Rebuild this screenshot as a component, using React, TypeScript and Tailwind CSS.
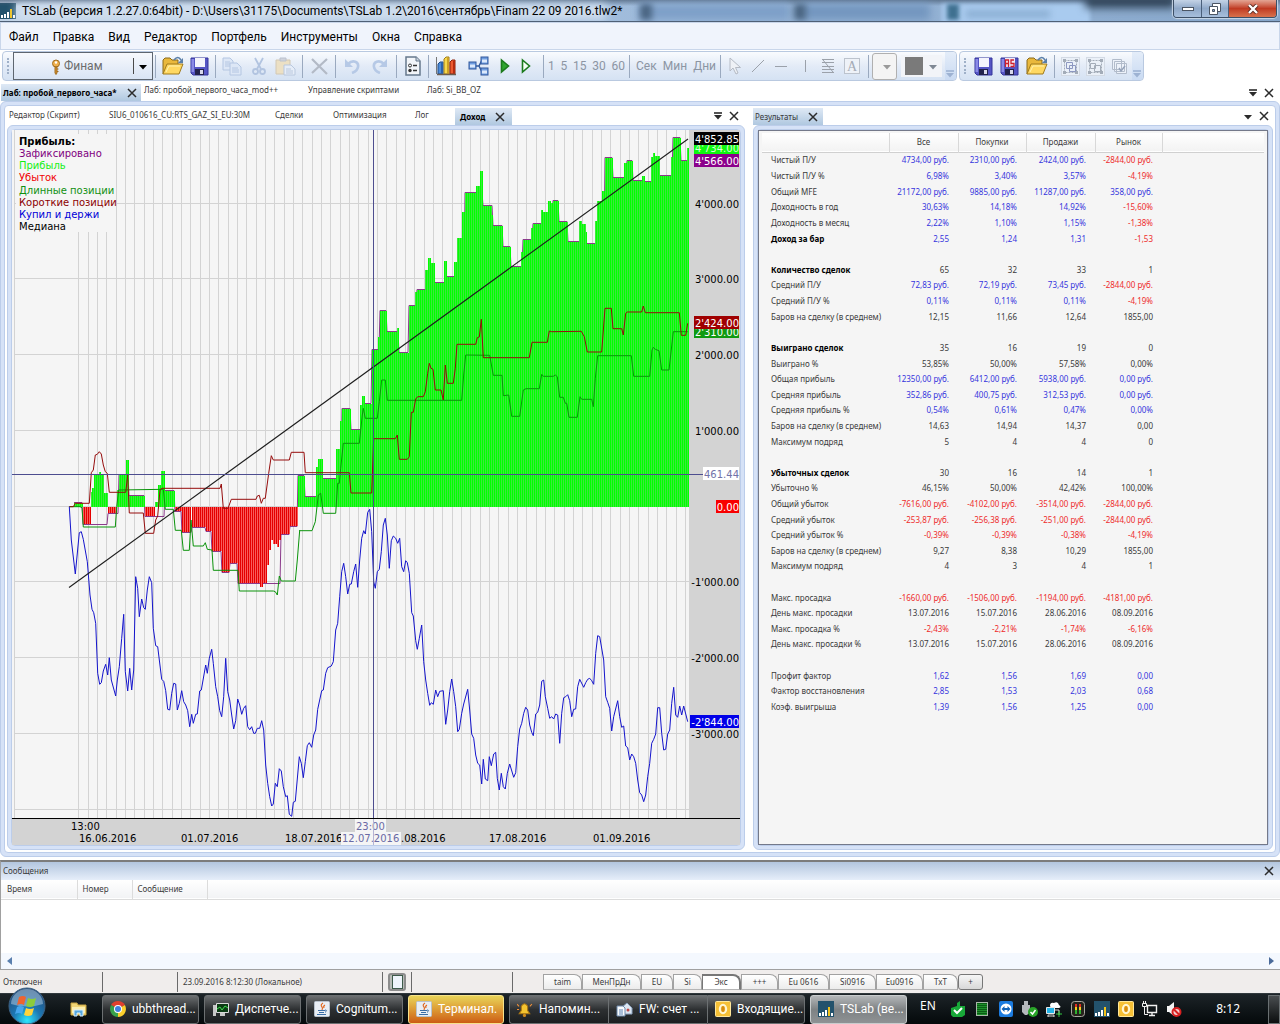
import type { ReactNode } from "react";
import clsx from "clsx";

type Segment = [number, number, string];

// every segment is an origin plus points counted in thirds of a pixel from it
const trace = (segments: Segment[]) =>
  segments
    .flatMap(([ox, oy, pts]) =>
      pts.split(" ").map((p) => {
        const [x, y] = p.split(",").map(Number);
        return `${(ox + x / 3).toFixed(1)},${(oy + y / 3).toFixed(1)}`;
      }),
    )
    .join(" ");

const SHORTS = trace([
  [60, 440, "28,200 40,200 46,190 88,190 94,98 100,90 106,45 112,43 118,35 124,42 130,75 136,95 142,100 148,157 197,157 203,105 208,219 250,219 256,280 281,280 287,240 293,228 300,150 306,145 480,145 484,132 490,205 504,205 514,178 588,178 592,168 598,166 604,190 610,175 616,175 626,100 634,47 640,60 688,60 694,37 732,37 736,98"],
  [0, 125, "917,1043 1048,1043 1053,1104 1115,1104 1121,940"],
  [370, 125, "10,941 76,941 82,930 88,1003 112,1003 118,995 124,862 130,862 137,822 143,815 160,815 166,800 173,745 178,715 183,730 189,733 196,795 213,795 220,825 226,720 232,775 250,775 256,730 261,658 317,658 322,638 328,636 334,583 340,698 478,698 486,652 532,652 538,618 545,620 634,619 643,635 652,681 695,681 705,550 724,550 729,611 755,611 760,630 767,565 772,561 815,561 820,543 826,563 928,563 934,631 947,631 953,595"],
]);

const LONGS = trace([
  [60, 440, "28,200 60,200 66,203 70,261 166,261 170,200 176,150 310,148 316,208 340,208 346,271 364,271 370,331 388,331 393,240 400,318 430,318 436,308 442,328 456,330 460,391 534,391 538,453 640,453 646,455 652,465 658,408 664,423 706,423 712,360 719,271"],
  [0, 480, "898,152 936,152 946,125 955,45 962,40 970,100 1007,100 1013,10 1018,10"],
  [0, 125, "1022,1030 1030,955 1078,955 1087,870 1090,850 1096,880 1132,880"],
  [370, 125, "22,880 28,830 35,765 46,765 52,826 275,826 281,750 287,690 359,691 370,751 396,751 400,812 416,810 425,874 449,874 460,795 468,791 508,791 515,748 520,754 550,754 556,750 562,755 569,817 580,817 586,835 590,835 597,877 622,877 630,815 635,823 665,823 670,845 676,760 683,692 784,692 791,754 839,754 846,675 850,667 856,673 867,677 875,735 897,735 910,620 953,620"],
]);

const BUY_AND_HOLD = trace([
  [0, 480, "208,80 214,180 226,282 238,158 244,155 250,178 262,245 270,345 276,388 281,398 287,430 293,580 299,613 304,608 310,573 317,553 323,585 328,533 334,600 347,648 352,600 358,560 365,475 371,403 376,575 383,633 389,565 395,630 401,570 407,290 413,325 418,410 425,357 431,383 436,388 442,330 448,290 455,308 460,445 467,497 473,500 485,598 491,604 497,632 503,688 509,690 515,640 521,610 527,612 532,690 538,670 545,632 551,665 557,675 563,692 569,740 575,703 580,730 587,703 592,702 599,633 604,630 617,555 622,580 628,535 635,508 640,550 647,620 653,650 659,692 665,710 671,650 677,535 683,635 689,660 695,705 701,747 707,722 713,657 719,675 725,703 731,685 737,677 743,740 749,749 755,740 761,760 766,760 772,745 779,745 785,722 791,750 797,855 803,910 809,950 815,978 820,972 826,910 832,920 838,866 844,873 850,920 857,950 862,947 868,1003 875,1009 880,967 886,964 898,830 904,850 910,893 916,845 922,797 928,788 935,802 941,765 947,750 953,688 959,660 965,632 970,630 977,580 983,563 994,558 1000,545 1007,450 1013,430 1019,350 1025,275 1031,250 1037,290 1043,342 1049,313 1054,312 1061,275 1067,252 1073,322 1079,240 1085,175 1091,152 1096,162 1103,97 1109,88"],
  [370, 480, "5,155 11,305 16,325 22,275 28,268 34,215 40,135 46,115 52,165 58,265 64,182 70,168 77,175 83,190 89,175 95,260 101,275 107,242 112,248 118,280 125,398 130,408 137,482 142,508 148,475 155,435 161,545 167,600 173,640 179,676 184,668 190,673 197,630 203,650 209,634 220,632 227,733 233,690 239,635 245,597 251,635 257,680 263,755 268,748 275,700 281,672 293,628 299,690 305,762 311,775 317,825 323,850 329,855 335,912 340,838 346,897 353,902 358,830 364,857 371,822 377,817 382,895 388,930 394,880 400,920 406,927 412,880 419,852 431,892 437,878 443,800 449,747 455,730 461,700 467,682 473,690 479,735 485,757 490,767 497,702 503,697 509,675 515,604 521,600 526,650 533,685 539,715 545,710 551,717 557,702 563,705 569,790 575,700 581,653 587,650 593,644 599,662 605,710 611,688 617,687 623,620 629,598 641,622 647,608 653,598 659,595 665,602 671,613 677,520 683,467 689,470 701,540 707,650 713,667 719,685 725,753 731,710 743,662 749,710 755,742 761,738 767,798 773,803 779,840 785,822 791,830 797,850 803,900 809,938 815,945 821,965 827,945 833,890 839,850 845,790 851,778 857,762 863,683 869,683 875,760 881,810 887,808 893,762 899,750 905,670 911,622 917,705 923,712 929,678 935,705 941,678 953,725"],
]);

// [x start, x end, level]; above the zero line is profit, below it is loss
const STEPS: number[][] = [
  [70, 74, 506], [74, 83, 503], [83, 91, 524], [91, 92, 492], [92, 94, 488], [94, 99, 475], [99, 101, 472], [101, 104, 475],
  [104, 108, 493], [108, 117, 513], [117, 119, 490], [119, 126, 475], [126, 129, 460], [129, 145, 496], [145, 155, 516],
  [155, 158, 502], [158, 161, 485], [161, 165, 471], [165, 175, 491], [175, 182, 511], [182, 191, 532], [192, 206, 527],
  [206, 212, 531], [212, 222, 551], [222, 230, 572], [230, 238, 563], [238, 260, 583], [260, 263, 587], [263, 267, 583],
  [267, 269, 565], [269, 271, 550], [271, 273, 540], [273, 277, 544], [277, 279, 547], [279, 281, 540], [281, 290, 534],
  [290, 298, 526], [298, 305, 476], [305, 316, 497], [316, 318, 467], [318, 323, 459], [323, 336, 479], [336, 340, 449],
  [340, 342, 421], [342, 351, 409], [351, 360, 430], [360, 362, 405], [362, 365, 396], [365, 372, 404], [372, 378, 350],
  [378, 380, 337], [380, 387, 311], [387, 397, 332], [397, 399, 328], [399, 409, 353], [409, 415, 306], [415, 417, 292],
  [417, 425, 290], [425, 428, 270], [428, 431, 258], [431, 435, 263], [435, 444, 283], [444, 447, 261], [447, 454, 277],
  [454, 457, 262], [457, 462, 238], [462, 465, 212], [465, 476, 193], [476, 480, 186], [480, 483, 171], [483, 492, 206],
  [492, 493, 215], [493, 503, 226], [503, 511, 247], [511, 521, 267], [521, 523, 252], [523, 531, 240], [531, 533, 228],
  [533, 541, 224], [541, 543, 210], [543, 548, 212], [548, 551, 201], [551, 553, 203], [553, 559, 201], [559, 568, 222],
  [568, 579, 242], [579, 582, 221], [582, 586, 224], [586, 587, 232], [587, 595, 244], [595, 597, 221], [597, 602, 201],
  [602, 605, 191], [605, 613, 158], [613, 624, 178], [624, 627, 163], [627, 633, 161], [633, 642, 181], [642, 645, 176],
  [645, 651, 182], [651, 653, 157], [653, 655, 153], [655, 660, 156], [660, 671, 176], [671, 673, 157], [673, 681, 138],
  [681, 687, 161], [687, 689, 148],
];

const ZERO = 507;

const isProfit = (y: number) => y < ZERO;
const isLoss = (y: number) => y > ZERO;

const area = (pick: (y: number) => boolean) =>
  STEPS.filter((s) => pick(s[2])).map(([a, b, y]) => `M${a} ${ZERO}V${y}H${b}V${ZERO}Z`).join("");

// one thin line for every bar
const bars = (pick: (y: number) => boolean) =>
  STEPS.filter((s) => pick(s[2]))
    .flatMap(([a, b, y]) => {
      const lines: string[] = [];
      for (let x = a + (a % 2); x < b; x += 2) lines.push(`M${x + 0.5} ${ZERO}V${y}`);
      return lines;
    })
    .join("");

// closed profit holds its level until the next long step begins
const FIXED = STEPS.filter(([a, b]) => b - a > 5)
  .map(([a, b, y], i, all) => {
    const level = y < ZERO ? y - 0.5 : y + 0.5;
    const end = i + 1 < all.length ? all[i + 1][0] - 1 : b;
    return `${a},${level} ${end},${level}`;
  })
  .join(" ");

const GRID_X = Array.from({ length: 66 }, (_, i) => Math.round(78.3 + (i * 28) / 3) + 0.5);
const GRID_Y = [203.5, 278.5, 354.5, 430.5, 506.5, 581.5, 657.5, 733.5, 809.5];

const AXIS: [number, string][] = [
  [208, "4'000.00"], [283, "3'000.00"], [359, "2'000.00"], [435, "1'000.00"],
  [586, "-1'000.00"], [662, "-2'000.00"], [738, "-3'000.00"],
];

// x, top, height, fill, text colour, label
const MARKS: [number, number, number, string, string, string][] = [
  [694, 142, 12, "#10f810", "#d8ffd8", "4'734.00"],
  [694, 132, 13, "#000000", "#ffffff", "4'852.85"],
  [694, 154, 13, "#8b008b", "#ffffff", "4'566.00"],
  [694, 327, 11, "#109a10", "#ffffff", "2'310.00"],
  [694, 316, 13, "#a00000", "#ffffff", "2'424.00"],
  [703, 467, 13, "#ffffff", "#7272a8", "461.44"],
  [716, 500, 13, "#f80000", "#ffffff", "0.00"],
  [690, 715, 13, "#0000e8", "#ffffff", "-2'844.00"],
];

const LEGEND: [string, string][] = [
  ["Зафиксировано", "#800080"],
  ["Прибыль", "#14f014"],
  ["Убыток", "#f00000"],
  ["Длинные позиции", "#109010"],
  ["Короткие позиции", "#8b0000"],
  ["Купил и держи", "#0000d8"],
  ["Медиана", "#000000"],
];

const DATES: [number, string][] = [
  [79, "16.06.2016"], [181, "01.07.2016"], [285, "18.07.2016"], [401, ".08.2016"], [489, "17.08.2016"], [593, "01.09.2016"],
];

function ProfitChart() {
  return (
    <svg viewBox="12 130 728 715" className="block w-full font-['DejaVu_Sans',sans-serif] text-[10px]">
      <rect x="12" y="130" width="728" height="715" fill="#d3d3d3" />
      <rect x="12" y="130" width="677" height="688" fill="#f5f5f5" />
      <g stroke="#d3d3d3">
        <path d="M14.5 130V818" />
        {GRID_X.map((x) => <path key={x} d={`M${x} 130V818`} />)}
        {GRID_Y.map((y) => <path key={y} d={`M14 ${y}H689`} />)}
      </g>
      <polyline points={FIXED} fill="none" stroke="#8b3a8b" />
      <path d={area(isProfit)} fill="#3ce83c" />
      <path d={bars(isProfit)} stroke="#00ff00" />
      <path d={area(isLoss)} fill="#f85c5c" />
      <path d={bars(isLoss)} stroke="#e40000" />
      <polyline points={LONGS} fill="none" stroke="#0b930b" />
      <polyline points={SHORTS} fill="none" stroke="#960c0c" />
      <polyline points={BUY_AND_HOLD} fill="none" stroke="#1414cc" />
      <path d="M69 587.5L688 139" stroke="#1c1c1c" strokeWidth="1.1" />
      <path d="M12 474.5H703M373.5 130V818" stroke="#4d4d8f" />

      <rect x="16" y="134" width="100" height="98" fill="#f5f5f5" />
      <text x="19" y="145" className="font-bold">Прибыль:</text>
      {LEGEND.map(([label, color], i) => (
        <text key={label} x="19" y={157 + Math.round(i * 12.2)} fill={color}>{label}</text>
      ))}

      {AXIS.map(([y, label]) => <text key={label} x="739" y={y} textAnchor="end">{label}</text>)}
      {MARKS.map(([x, y, h, fill, color, label]) => (
        <g key={label}>
          <rect x={x} y={y} width={739 - x} height={h} fill={fill} />
          <text x="739" y={y + h - 2} textAnchor="end" fill={color}>{label}</text>
        </g>
      ))}

      <path d="M12 818.5H740" stroke="#000" />
      <text x="71" y="830">13:00</text>
      {DATES.map(([x, label]) => <text key={label} x={x} y="842">{label}</text>)}
      <rect x="355" y="819" width="31" height="13" fill="#f5f5f5" />
      <rect x="341" y="832" width="60" height="13" fill="#f5f5f5" />
      <text x="356" y="830" fill="#6a6aa4">23:00</text>
      <text x="342" y="842" fill="#6a6aa4">12.07.2016</text>
      <path d="M373.5 819V845" stroke="#b4b4d4" />
    </svg>
  );
}

const RESULTS = `Чистый П/У|4734,00 руб.|2310,00 руб.|2424,00 руб.|-2844,00 руб.
Чистый П/У %|6,98%|3,40%|3,57%|-4,19%
Общий MFE|21172,00 руб.|9885,00 руб.|11287,00 руб.|358,00 руб.
Доходность в год|30,63%|14,18%|14,92%|-15,60%
Доходность в месяц|2,22%|1,10%|1,15%|-1,38%
*Доход за бар|2,55|1,24|1,31|-1,53

*#Количество сделок|65|32|33|1
Средний П/У|72,83 руб.|72,19 руб.|73,45 руб.|-2844,00 руб.
Средний П/У %|0,11%|0,11%|0,11%|-4,19%
#Баров на сделку (в среднем)|12,15|11,66|12,64|1855,00

*#Выиграно сделок|35|16|19|0
#Выиграно %|53,85%|50,00%|57,58%|0,00%
Общая прибыль|12350,00 руб.|6412,00 руб.|5938,00 руб.|0,00 руб.
Средняя прибыль|352,86 руб.|400,75 руб.|312,53 руб.|0,00 руб.
Средняя прибыль %|0,54%|0,61%|0,47%|0,00%
#Баров на сделку (в среднем)|14,63|14,94|14,37|0,00
#Максимум подряд|5|4|4|0

*#Убыточных сделок|30|16|14|1
#Убыточно %|46,15%|50,00%|42,42%|100,00%
Общий убыток|-7616,00 руб.|-4102,00 руб.|-3514,00 руб.|-2844,00 руб.
Средний убыток|-253,87 руб.|-256,38 руб.|-251,00 руб.|-2844,00 руб.
Средний убыток %|-0,39%|-0,39%|-0,38%|-4,19%
#Баров на сделку (в среднем)|9,27|8,38|10,29|1855,00
#Максимум подряд|4|3|4|1

Макс. просадка|-1660,00 руб.|-1506,00 руб.|-1194,00 руб.|-4181,00 руб.
#День макс. просадки|13.07.2016|15.07.2016|28.06.2016|08.09.2016
Макс. просадка %|-2,43%|-2,21%|-1,74%|-6,16%
#День макс. просадки %|13.07.2016|15.07.2016|28.06.2016|08.09.2016

Профит фактор|1,62|1,56|1,69|0,00
Фактор восстановления|2,85|1,53|2,03|0,68
Коэф. выигрыша|1,39|1,56|1,25|0,00`.split("\n");

function ResultsTable() {
  return (
    <table className="h-[582px] w-full table-fixed border-collapse text-[8px] leading-[10px] text-[#3a3a3a]">
      <colgroup>
        <col className="w-[127px]" />
        <col className="w-[69px]" />
        <col className="w-[68px]" />
        <col className="w-[69px]" />
        <col className="w-[67px]" />
        <col />
      </colgroup>
      <thead>
        <tr className="h-[19px] border-b border-[#d0d0d0] bg-linear-to-b from-white to-[#f3f3f3]">
          {["", "Все", "Покупки", "Продажи", "Рынок", ""].map((h, i) => (
            <th key={i} className={clsx("p-0 text-center font-normal", i < 5 && "border-r border-[#d8d8d8]")}>{h}</th>
          ))}
        </tr>
      </thead>
      <tbody>
        {RESULTS.map((line, i) => {
          const [name, ...cells] = line.split("|");
          return (
            <tr key={i}>
              <th className={clsx("p-0 pl-[9px] text-left whitespace-nowrap", name.startsWith("*") ? "font-bold text-black" : "font-normal")}>
                {name.replace(/^[*#]+/, "") || "\u00a0"}
              </th>
              {cells.map((c, j) => (
                <td
                  key={j}
                  className={clsx(
                    "p-0 pr-[9px] text-right whitespace-nowrap",
                    /^\*?#/.test(name) ? "text-[#3a3a3a]" : c.startsWith("-") ? "text-[#ee2c2c]" : "text-[#3535dd]",
                  )}
                >
                  {c}
                </td>
              ))}
            </tr>
          );
        })}
      </tbody>
    </table>
  );
}

function Cross({ size = 10 }: { size?: number }) {
  return (
    <svg width={size} height={size} viewBox="0 0 10 10" className="shrink-0">
      <path d="M1 1L9 9M9 1L1 9" stroke="#2b2b2b" strokeWidth="1.5" />
    </svg>
  );
}

function Caret({ bar, className = "text-[#2b2b2b]" }: { bar?: boolean; className?: string }) {
  return (
    <svg width="10" height="8" viewBox="0 0 10 8" className={clsx("shrink-0", className)}>
      {bar && <path d="M1 1H9" stroke="currentColor" strokeWidth="1.6" />}
      <path d="M1 3H9L5 7.5Z" fill="currentColor" />
    </svg>
  );
}

function FolderIcon() {
  return (
    <svg width="22" height="20" viewBox="0 0 22 20">
      <path d="M1 18V4L3 2H8L10 4H16V8" fill="#e9b83c" stroke="#8a6a1c" />
      <path d="M1 18L5 8H21L17 18Z" fill="#ffd861" stroke="#a07a1c" />
      <path d="M4 16L7 10H18" fill="none" stroke="#fff2b0" />
      <path d="M12 4Q16 -1 19 4" fill="none" stroke="#5a7fa8" strokeWidth="1.6" />
      <path d="M21 2V7H16Z" fill="#5a7fa8" />
    </svg>
  );
}

function SaveIcon({ as }: { as?: boolean }) {
  return (
    <svg width="19" height="19" viewBox="0 0 19 19">
      <path d="M1 1H18V18H3L1 16Z" fill="#5555c4" stroke="#34349a" />
      <path d="M1.500 2H4V15H1.500Z" fill="#8a8ae6" />
      <rect x="5" y="1" width="10" height="9" fill={as ? "#eeeaf8" : "#f4f4fc"} />
      {as && <path d="M5.500 10V3H8.500V10M5.500 6.500H8.500M14 3H11V6.500H14V9.500H10.500" fill="none" stroke="#d0202c" strokeWidth="1.300" />}
      <rect x="5" y="12" width="9" height="6" fill="#22224c" />
      <rect x="10" y="13" width="3" height="4" fill="#d8d8ea" />
    </svg>
  );
}

function CopyIcon() {
  return (
    <svg width="20" height="19" viewBox="0 0 20 19" fill="#dde7f6" stroke="#b4c6e2">
      <path d="M1 1H8L11 4V13H1Z" />
      <path d="M3 5H8M3 7H8M3 9H8" />
      <path d="M8 6H15L19 10V18H8Z" />
      <path d="M10 11H16M10 13H17M10 15H17" />
    </svg>
  );
}

function CutIcon() {
  return (
    <svg width="14" height="19" viewBox="0 0 14 19" fill="none" stroke="#b2c4e0" strokeWidth="1.800">
      <path d="M3 1L9 12M11 1L5 12" />
      <circle cx="3.500" cy="14.500" r="2.500" />
      <circle cx="10.500" cy="14.500" r="2.500" />
    </svg>
  );
}

function PasteIcon() {
  return (
    <svg width="21" height="19" viewBox="0 0 21 19">
      <path d="M1 3H15V17H1Z" fill="#ece0c4" stroke="#d2c8b4" />
      <path d="M5 1H11V4H5Z" fill="#cfd3dc" stroke="#bcc2ce" />
      <path d="M9 8H16L20 12V18H9Z" fill="#e6edf8" stroke="#b9c8de" />
      <path d="M11 12H16M11 14H18M11 16H18" stroke="#b9c8de" />
    </svg>
  );
}

function UndoIcon({ flip }: { flip?: boolean }) {
  return (
    <svg width="17" height="16" viewBox="0 0 17 16" className={clsx(flip && "-scale-x-100")}>
      <path d="M4 6C9 1 15 4 14 9C13.500 12 11 14 8 15" fill="none" stroke="#b6c9e6" strokeWidth="2.600" />
      <path d="M1 1V9H9Z" fill="#b6c9e6" />
    </svg>
  );
}

function ScriptIcon() {
  return (
    <svg width="16" height="20" viewBox="0 0 16 20">
      <path d="M1 1H11L15 5V19H1Z" fill="#f2f5f9" stroke="#66788c" strokeWidth="1.500" />
      <path d="M11 1V5H15" fill="#cbd5e0" stroke="#66788c" />
      <path d="M8 9.500H12M8 14.500H12" stroke="#333" strokeWidth="1.500" />
      <circle cx="5" cy="9.500" r="1.500" fill="none" stroke="#333" />
      <circle cx="5" cy="14.500" r="1.700" fill="#333" />
    </svg>
  );
}

function BooksIcon() {
  return (
    <svg width="22" height="21" viewBox="0 0 22 21">
      <path d="M1.500 1V18" fill="none" stroke="#777" />
      <path d="M3 8L5 6H8V18H3Z" fill="#4a8cdc" stroke="#1f4a84" />
      <path d="M6 6H8V18H6Z" fill="#2c62ac" />
      <path d="M9 3L11 1H14V18H9Z" fill="#f6d84c" stroke="#a07c18" />
      <path d="M12 2H14V18H12Z" fill="#cfa024" />
      <path d="M15 6L17 4H20V18H15Z" fill="#ee5a30" stroke="#8c2008" />
      <path d="M18 5H20V18H18Z" fill="#b42c10" />
      <path d="M2 18.500H21" stroke="#6b5c50" strokeWidth="1.500" />
    </svg>
  );
}

function NodesIcon() {
  return (
    <svg width="21" height="20" viewBox="0 0 21 20" fill="#6f9de0" stroke="#32599c">
      <path d="M8 10H11M11 10L14 4M11 10L14 16" fill="none" strokeWidth="1.500" />
      <rect x="1" y="6" width="7" height="7" />
      <rect x="13" y="1" width="7" height="7" />
      <rect x="13" y="12" width="7" height="7" />
      <path d="M2 10H7M14 5H19M14 16H19" stroke="#dce9fb" strokeWidth="3" />
    </svg>
  );
}

function PlayIcon({ hollow }: { hollow?: boolean }) {
  return (
    <svg width="10" height="16" viewBox="0 0 10 16">
      <path d="M1.500 2L8.500 8L1.500 14Z" fill={hollow ? "#f4fff4" : "#2fa52f"} stroke="#1c7a1c" strokeWidth="1.600" />
    </svg>
  );
}

function PointerIcon() {
  return (
    <svg width="13" height="18" viewBox="0 0 13 18">
      <path d="M1 1V14L4 11L7 17L9 16L6.500 10.500H11.500Z" fill="#eef1f6" stroke="#b4bac4" />
    </svg>
  );
}

function StrokeIcon({ d }: { d: string }) {
  return (
    <svg width="14" height="16" viewBox="0 0 14 16" fill="none" stroke="#9ba1aa">
      <path d={d} />
    </svg>
  );
}

function GroupIcon({ inner }: { inner: ReactNode }) {
  return (
    <svg width="19" height="19" viewBox="0 0 19 19" fill="none" stroke="#a3acb8">
      <rect x="0.500" y="0.500" width="18" height="18" stroke="#d3dae4" fill="#eaf0f8" />
      <path d="M3.500 3.500H15.500V15.500H3.500Z" strokeDasharray="2 1" />
      <path d="M2 2H5V5H2ZM14 2H17V5H14ZM2 14H5V17H2ZM14 14H17V17H14Z" fill="#a3acb8" stroke="none" />
      {inner}
    </svg>
  );
}

function TsLabIcon({ size = 16 }: { size?: number }) {
  return (
    <svg width={size} height={size} viewBox="0 0 16 16" className="shrink-0">
      <rect width="16" height="16" fill="#23526c" />
      <path d="M1 12H3V15H1ZM4 11H6V15H4ZM7 9H9V15H7ZM13 12H15V15H13Z" fill="#fff" />
      <path d="M10 6H12V15H10Z" fill="#f2c319" />
    </svg>
  );
}

function ToolGroup({ className, children }: { className: string; children: ReactNode }) {
  return <div className={clsx("flex h-[23px] shrink-0 items-center border-l border-[#9aa9bf]", className)}>{children}</div>;
}

function ToolButton({ label, children }: { label: string; children: ReactNode }) {
  return (
    <button type="button" aria-label={label} className="flex h-6 items-center">
      {children}
    </button>
  );
}

function Grip() {
  return <div className="mx-1 h-4 w-0 shrink-0 border-l-2 border-dotted border-[#9fb0c8]" />;
}

function Overflow() {
  return (
    <div className="ml-auto flex w-[11px] shrink-0 items-end self-stretch rounded-r bg-linear-to-b from-[#e4edf9] to-[#c9daf2] pb-0.5">
      <Caret bar className="text-[#9db2d2]" />
    </div>
  );
}

const barStyle = "flex h-[30px] items-center rounded border border-[#b9c9e0] bg-linear-to-b from-[#f9fbfe] via-[#e3ebf7] to-[#d5e2f3]";

function Toolbars() {
  return (
    <div className="flex h-[31px] items-start gap-0.5 bg-white pt-px pl-0.5 font-['Roboto',sans-serif]">
      <div className={clsx(barStyle, "w-[955px]")}>
        <Grip />
        <div className="relative mr-0.5 flex h-7 w-[140px] shrink-0 items-center border border-[#5e6670] bg-linear-to-b from-[#f7f9fd] to-[#d9e4f4]">
          <select aria-label="Счет" className="h-full w-full appearance-none bg-transparent pl-[50px] text-[12px] text-[#6c6c6c]">
            <option>Финам</option>
          </select>
          <svg width="10" height="16" viewBox="0 0 10 16" className="pointer-events-none absolute top-1.5 left-[37px]">
            <circle cx="5" cy="4.500" r="3.500" fill="#f0b04c" stroke="#a06c20" />
            <circle cx="5" cy="3.500" r="1.200" fill="#fff" />
            <path d="M4 8H6V14L5 15.500L4 14ZM6 10H7.500M6 12.500H7.500" fill="#d8922c" stroke="#a06c20" />
          </svg>
          <span className="pointer-events-none absolute right-0 flex h-4 items-center border-l border-[#4a4a4a] px-1">
            <Caret className="text-black" />
          </span>
        </div>
        <ToolGroup className="w-[60px] justify-between pr-1.5 pl-1.5">
          <ToolButton label="Открыть"><FolderIcon /></ToolButton>
          <ToolButton label="Сохранить"><SaveIcon /></ToolButton>
        </ToolGroup>
        <ToolGroup className="w-[87px] justify-between px-1.5">
          <ToolButton label="Копировать"><CopyIcon /></ToolButton>
          <ToolButton label="Вырезать"><CutIcon /></ToolButton>
          <ToolButton label="Вставить"><PasteIcon /></ToolButton>
        </ToolGroup>
        <ToolGroup className="w-[33px] justify-center">
          <ToolButton label="Удалить">
            <svg width="17" height="17" viewBox="0 0 17 17"><path d="M1 1L16 16M16 1L1 15" stroke="#b3bac6" strokeWidth="2.200" /></svg>
          </ToolButton>
        </ToolGroup>
        <ToolGroup className="w-[61px] justify-between px-2">
          <ToolButton label="Отменить"><UndoIcon /></ToolButton>
          <ToolButton label="Повторить"><UndoIcon flip /></ToolButton>
        </ToolGroup>
        <ToolGroup className="w-8 justify-center">
          <ToolButton label="Скрипт"><ScriptIcon /></ToolButton>
        </ToolGroup>
        <ToolGroup className="w-[115px] justify-between pr-3 pl-1.5">
          <ToolButton label="График"><BooksIcon /></ToolButton>
          <ToolButton label="Схема"><NodesIcon /></ToolButton>
          <ToolButton label="Запуск"><PlayIcon /></ToolButton>
          <ToolButton label="Шаг"><PlayIcon hollow /></ToolButton>
        </ToolGroup>
        <ToolGroup className="w-[86px] justify-between px-1 text-[12px] text-[#8c95a3]">
          {["1", "5", "15", "30", "60"].map((n) => <button key={n} type="button">{n}</button>)}
        </ToolGroup>
        <ToolGroup className="w-[91px] justify-between px-1 pl-1.5 text-[12px] text-[#8c95a3]">
          {["Сек", "Мин", "Дни"].map((n) => <button key={n} type="button">{n}</button>)}
        </ToolGroup>
        <ToolGroup className="w-[148px] justify-between px-2">
          <ToolButton label="Указатель"><PointerIcon /></ToolButton>
          <ToolButton label="Линия"><StrokeIcon d="M1 14L13 2" /></ToolButton>
          <ToolButton label="Горизонталь"><StrokeIcon d="M1 8.500H13" /></ToolButton>
          <ToolButton label="Вертикаль"><StrokeIcon d="M7.500 2V14" /></ToolButton>
          <ToolButton label="Фибоначчи"><StrokeIcon d="M1 1.500H13M1 4.500H13M1 8.500H13M1 11.500H13M1 14.500H13M2 2L12 14" /></ToolButton>
          <ToolButton label="Текст">
            <span className="flex h-4 w-4 items-center justify-center border border-[#bcc3cd] bg-[#eef2f8] font-['Liberation_Serif',serif] text-[14px] text-[#a4abb6]">A</span>
          </ToolButton>
        </ToolGroup>
        <ToolGroup className="gap-1 pl-[3px]">
          <button type="button" aria-label="Стиль" className="flex h-[27px] w-[25px] items-center justify-end rounded-[3px] border border-[#b0b0b0] bg-[#f4f4f4] pr-1">
            <Caret className="text-[#9a9a9a]" />
          </button>
          <button type="button" aria-label="Цвет" className="flex h-[22px] w-[41px] items-center justify-between bg-[#f2f4f8] px-1">
            <span className="h-[18px] w-[18px] bg-[#7a7a7a]" />
            <Caret className="text-[#7f8894]" />
          </button>
        </ToolGroup>
        <Overflow />
      </div>
      <div className={clsx(barStyle, "w-[185px]")}>
        <Grip />
        <div className="flex w-[86px] items-center justify-between pr-1.5 pl-1">
          <ToolButton label="Сохранить"><SaveIcon /></ToolButton>
          <ToolButton label="Сохранить как"><SaveIcon as /></ToolButton>
          <ToolButton label="Открыть"><FolderIcon /></ToolButton>
        </div>
        <ToolGroup className="w-[78px] justify-between pr-1 pl-1.5">
          <ToolButton label="Группировать"><GroupIcon inner={<path d="M5.500 5.500H11.500V11.500H5.500ZM8.500 8.500H14.500V14.500H8.500Z" stroke="#8d98c0" />} /></ToolButton>
          <ToolButton label="Разгруппировать"><GroupIcon inner={<path d="M4.500 6.500H9.500V11.500H4.500ZM8.500 8.500H14.500V14.500H8.500Z" />} /></ToolButton>
          <ToolButton label="Выбрать все">
            <svg width="17" height="17" viewBox="0 0 17 17" fill="#edf2fa" stroke="#b2bccb">
              <path d="M1.500 1.500H10.500V11.500H1.500ZM3.500 3.500H13.500V13.500H3.500ZM5.500 5.500H15.500V15.500H5.500Z" />
              <path d="M8 10L10 13L14 8" fill="none" stroke="#95a3ba" strokeWidth="1.500" />
            </svg>
          </ToolButton>
        </ToolGroup>
        <Overflow />
      </div>
    </div>
  );
}

function TitleBar() {
  return (
    <header className="relative flex h-[22px] items-center overflow-hidden border-b border-[#4f6076] bg-linear-to-r from-[#c2d4e8] via-[#9fbbdb] to-[#86a6ca]">
      <div className="absolute inset-x-0 top-0 h-1.5 bg-linear-to-b from-[#4c6078] to-transparent opacity-70" />
      <div className="absolute top-1 left-[640px] h-4 w-[150px] bg-[#7d9fc8] blur-xs" />
      <div className="absolute top-1 left-[800px] h-4 w-[130px] bg-[#7396bf] blur-xs" />
      <div className="absolute top-1 left-[942px] h-5 w-[148px] bg-[#a9cbef] blur-[2px]" />
      <div className="absolute top-1 left-[640px] h-4 w-3 bg-[#4a6582] blur-[3px]" />
      <div className="absolute top-1 left-[794px] h-4 w-3 bg-[#4a6582] blur-[3px]" />
      <div className="absolute top-1 left-[947px] h-4 w-3 bg-[#3f7090] blur-[2px]" />
      <div className="absolute top-2.5 left-[966px] h-2 w-[84px] bg-[#8db0d4] blur-[3px]" />
      <div className="absolute -top-1 left-[1085px] h-3 w-[90px] bg-[#2f4358] blur-xs" />
      <div className="absolute top-1 left-4 h-4 w-[590px] bg-[#d0deee] blur-xs" />
      <TsLabIcon />
      <h1 className="relative ml-1.5 font-['Roboto',sans-serif] text-[12px] leading-[18px] whitespace-nowrap text-black">
        TSLab (версия 1.2.27.0:64bit) - D:\Users\31175\Documents\TSLab 1.2\2016\сентябрь\Finam 22 09 2016.tlw2*
      </h1>
      <div className="absolute top-0 right-[3px] flex h-[18px] overflow-hidden rounded-b border border-t-0 border-[#3c4f66] shadow-[0_0_1px_1px_#c9d8e8]">
        <button type="button" aria-label="Свернуть" className="flex w-7 items-end justify-center border-r border-[#4a5f7a] bg-linear-to-b from-[#c4d3e6] via-[#8fa8c8] to-[#a7bfdc] pb-1.5">
          <span className="h-1 w-3 border border-[#4b5563] bg-white" />
        </button>
        <button type="button" aria-label="Восстановить" className="flex w-[27px] items-center justify-center border-r border-[#4a5f7a] bg-linear-to-b from-[#c4d3e6] via-[#8fa8c8] to-[#a7bfdc]">
          <svg width="12" height="12" viewBox="0 0 12 12">
            <path d="M3.500 0.500H11.500V8.500H3.500Z" fill="#fff" stroke="#4b5563" />
            <path d="M0.500 3.500H8.500V11.500H0.500Z" fill="#fff" stroke="#4b5563" />
            <path d="M3.500 6.500H5.500V8.500H3.500Z" fill="#8fa8c8" stroke="#4b5563" />
          </svg>
        </button>
        <button type="button" aria-label="Закрыть" className="flex w-[47px] items-center justify-center bg-linear-to-b from-[#e3a594] via-[#c03a22] to-[#d8714c]">
          <svg width="12" height="10" viewBox="0 0 12 10">
            <path d="M2 1L10 9M10 1L2 9" stroke="#5c2a20" strokeWidth="4" />
            <path d="M2 1L10 9M10 1L2 9" stroke="#fff" strokeWidth="2.400" />
          </svg>
        </button>
      </div>
    </header>
  );
}

function Frame({ className, children }: { className?: string; children: ReactNode }) {
  return (
    <div className={clsx("flex flex-1 flex-col rounded-md border border-[#bccdea] bg-[#d6e2f7] p-[3px]", className)}>
      <div className="flex flex-1 flex-col rounded-sm border border-[#bccdea] bg-white">{children}</div>
    </div>
  );
}

const activeTab = "flex shrink-0 items-center gap-2.5 bg-linear-to-b from-[#dfe9f5] to-[#b0c8e0]";

const PANEL_TABS: [string, string][] = [
  ["Редактор (Скрипт)", "w-[100px]"],
  ["SIU6_010616_CU:RTS_GAZ_SI_EU:30M", "w-[166px]"],
  ["Сделки", "w-[58px]"],
  ["Оптимизация", "w-[82px]"],
  ["Лог", "w-[40px]"],
];

function Workspace() {
  return (
    <main className="flex flex-1 flex-col pb-[3px]">
      <Frame>
        <div className="flex flex-1 gap-2 px-0.5 pb-0.5">
          <section className="flex min-w-0 flex-[738] flex-col">
            <nav className="flex h-[19px] items-stretch pl-0.5 text-[8px] text-[#3a3a3a]">
              {PANEL_TABS.map(([label, width]) => (
                <button key={label} type="button" className={clsx("pb-0.5 text-left whitespace-nowrap", width)}>{label}</button>
              ))}
              <button type="button" className={clsx(activeTab, "mt-0.5 w-[57px] px-[5px] font-bold text-black")}>
                Доход <Cross />
              </button>
              <span className="mr-1.5 ml-auto flex items-center gap-1.5"><Caret bar /><Cross /></span>
            </nav>
            <Frame><ProfitChart /></Frame>
          </section>
          <section className="flex min-w-0 flex-[520] flex-col">
            <nav className="flex h-[19px] items-stretch text-[8px] text-[#3a3a3a]">
              <button type="button" className={clsx(activeTab, "mt-0.5 w-[70px] px-0.5")}>
                Результаты <Cross />
              </button>
              <span className="mr-1 ml-auto flex items-center gap-1.5"><Caret /><Cross /></span>
            </nav>
            <Frame>
              <div className="flex-1 border border-[#74798a] bg-[#f5f5f5] p-[3px] pt-0.5"><ResultsTable /></div>
            </Frame>
          </section>
        </div>
      </Frame>
    </main>
  );
}

function Messages() {
  return (
    <section className="flex h-[110px] flex-col border-t-2 border-b border-l border-t-[#7c7c7c] border-b-[#a0a0a0] border-l-[#a0a0a0] bg-white text-[8px] text-[#3a3a3a]">
      <div className="flex h-[18px] items-center justify-between bg-linear-to-b from-[#b3c6df] to-[#e6eefa] pr-1.5 pl-0.5">
        <h2>Сообщения</h2>
        <Cross />
      </div>
      <table className="w-full table-fixed border-collapse">
        <thead>
          <tr className="h-[19px] border-b border-[#dcdcdc] bg-linear-to-b from-white to-[#f2f3f5]">
            <th className="w-[76px] border-r border-[#dcdcdc] p-0 pl-1.5 text-left font-normal">Время</th>
            <th className="w-[55px] border-r border-[#dcdcdc] p-0 pl-[5px] text-left font-normal">Номер</th>
            <th className="w-[75px] border-r border-[#dcdcdc] p-0 pl-[5px] text-left font-normal">Сообщение</th>
            <th className="p-0" />
          </tr>
        </thead>
      </table>
      <div className="mt-auto flex h-4 items-center justify-between bg-[#f4f8fe] px-1.5">
        <svg width="5" height="8" viewBox="0 0 5 8"><path d="M5 0V8L0 4Z" fill="#5a7fae" /></svg>
        <svg width="5" height="8" viewBox="0 0 5 8"><path d="M0 0V8L5 4Z" fill="#4a6a9a" /></svg>
      </div>
    </section>
  );
}

const SHEETS: [string, string][] = [
  ["taim", "w-[39px]"], ["МенПрДн", "w-[59px]"], ["EU", "w-8"], ["Si", "w-[29px]"], ["Экс", "w-[39px]"], ["+++", "w-[37px]"],
  ["Eu 0616", "w-[51px]"], ["Si0916", "w-[47px]"], ["Eu0916", "w-[47px]"], ["TxT", "w-[35px]"],
];

function StatusBar() {
  return (
    <div className="flex h-[23px] items-center bg-[#f0edec] text-[8px] text-[#3a3a3a]">
      <span className="flex h-5 w-[103px] items-center border-r border-[#6a6a6a] pl-[3px]">Отключен</span>
      <span className="h-5 w-[75px] border-r border-[#6a6a6a]" />
      <span className="flex h-5 w-[205px] items-center border-r border-[#6a6a6a] pl-[5px]">23.09.2016 8:12:30 (Локальное)</span>
      <span className="flex h-5 w-[29px] items-center justify-center border-r border-[#6a6a6a]">
        <button type="button" aria-label="Журнал" className="flex h-[18px] w-[18px] items-center justify-center rounded-[3px] border-2 border-[#8c8c8c] bg-[#b8bcb8]">
          <span className="h-3.5 w-[11px] border border-[#3d5a4a] bg-[#eef4fb]" />
        </button>
      </span>
      <span className="h-5 w-[101px] border-r border-[#6a6a6a]" />
      <nav className="ml-[30px] flex h-4 items-stretch">
        {SHEETS.map(([label, width]) => (
          <button
            key={label}
            type="button"
            className={clsx(
              "rounded-tr-lg border border-b-[#b5b5b5]",
              label === "Экс" ? "border-[#777] border-t-2 border-r-2 bg-white" : "border-[#a2a2a2] bg-linear-to-b from-white to-[#ececec]",
              width,
            )}
          >
            {label}
          </button>
        ))}
        <button type="button" className="w-[25px] rounded-[3px] border border-[#777] bg-linear-to-b from-[#f6f6f6] to-[#d8d8d8]">+</button>
      </nav>
    </div>
  );
}

function ChromeIcon() {
  return (
    <svg width="16" height="16" viewBox="0 0 16 16" className="shrink-0">
      <path d="M8 8L1.100 4A8 8 0 0 1 14.900 4Z" fill="#e0402e" />
      <path d="M8 8L14.900 4A8 8 0 0 1 8 16Z" fill="#fbcf2c" />
      <path d="M8 8L8 16A8 8 0 0 1 1.100 4Z" fill="#38a04a" />
      <circle cx="8" cy="8" r="4" fill="#fff" />
      <circle cx="8" cy="8" r="3" fill="#3f7fe0" />
    </svg>
  );
}

function MonitorIcon() {
  return (
    <svg width="17" height="15" viewBox="0 0 17 15" className="shrink-0">
      <path d="M1 3H4V14H1Z" fill="#c8c8c8" />
      <path d="M4.500 1.500H16.500V10.500H4.500Z" fill="#0c3c14" stroke="#dadada" />
      <path d="M5 7L8 5L10 8L13 4L16 6" fill="none" stroke="#40e050" />
      <path d="M8 11H13V14H8Z" fill="#c8c8c8" />
    </svg>
  );
}

function JavaIcon() {
  return (
    <svg width="16" height="16" viewBox="0 0 16 16" className="shrink-0">
      <rect x="0.500" y="0.500" width="15" height="15" rx="1" fill="#e9eef4" stroke="#b8c2cc" />
      <path d="M9 2Q6 4 8 6Q9 7 8 9M11 4Q9 5 10 7" fill="none" stroke="#e06820" strokeWidth="1.200" />
      <path d="M4 9.500H11M5 11.500H10M3 13.500H12M11 9Q14 9 11 11.500" fill="none" stroke="#3b6ea6" />
    </svg>
  );
}

function BellIcon() {
  return (
    <svg width="16" height="16" viewBox="1 0 15 15" className="shrink-0">
      <path d="M3 12L5 9V5Q8 0 11 5V9L13 12Z" fill="#f4c430" stroke="#a87412" />
      <circle cx="8" cy="13.500" r="1.500" fill="#d08a1c" />
      <path d="M1 3L3 5M1 8H3M15 3L13 5" stroke="#f09038" />
    </svg>
  );
}

function MailIcon() {
  return (
    <svg width="17" height="15" viewBox="0 0 17 15" className="shrink-0">
      <path d="M5 6L11 1L16 6V12H5Z" fill="#dce6f2" stroke="#8ba2bf" />
      <path d="M1 4H7L9 6V14H1Z" fill="#f8fafc" stroke="#6d89ac" />
      <path d="M3 8H7M3 10H7M3 12H7" stroke="#5c83b4" />
      <circle cx="12" cy="8" r="1.500" fill="#c04848" />
    </svg>
  );
}

function OutlookIcon() {
  return (
    <svg width="16" height="16" viewBox="0 0 16 16" className="shrink-0">
      <rect x="0.500" y="0.500" width="15" height="15" rx="1" fill="#f6c036" stroke="#ffe79a" />
      <ellipse cx="8" cy="8" rx="3.200" ry="4.200" fill="#fbe08c" stroke="#fff6d4" strokeWidth="2" />
      <ellipse cx="8" cy="8" rx="1.800" ry="3" fill="#d98c0c" />
    </svg>
  );
}

const taskButton = "flex h-[29px] items-center gap-1.5 overflow-hidden rounded-[3px] border px-[7px] font-['Roboto',sans-serif] text-[12px] whitespace-nowrap text-white";
const darkTask = "border-[#6c7072] bg-linear-to-b from-[#6c6f71] via-[#2d3032] via-50% to-[#1b1e20]";

function TaskBar() {
  return (
    <footer className="relative flex h-[31px] items-center border-t border-[#30383c] bg-linear-to-b from-[#1d2428] to-[#05090b]">
      <button type="button" aria-label="Пуск" className="absolute bottom-[-1px] left-[8px] z-10">
        <svg width="38" height="38" viewBox="0 0 38 38">
          <defs>
            <radialGradient id="orb" cx="50%" cy="90%" r="85%">
              <stop offset="0" stopColor="#2ee6fc" />
              <stop offset="0.450" stopColor="#1c78b4" />
              <stop offset="1" stopColor="#244a78" />
            </radialGradient>
          </defs>
          <circle cx="19" cy="19" r="18" fill="url(#orb)" stroke="#3d6284" />
          <path d="M3 17A16 15 0 0 1 35 17Q19 22 3 17Z" fill="#b6d2e8" opacity="0.500" />
          <path d="M11 10Q15 8 18 10L16 18Q13 16 9 18Z" fill="#ee6430" />
          <path d="M20 11Q24 13 28 11L26 19Q22 21 18 19Z" fill="#8ccc3c" />
          <path d="M9 20Q12 18 16 20L14 27Q11 25 7 27Z" fill="#46a6ee" />
          <path d="M18 21Q22 23 26 21L24 28Q20 30 16 28Z" fill="#ffd43c" />
        </svg>
      </button>
      <button type="button" aria-label="Проводник" className="ml-[70px] w-8">
        <svg width="17" height="16" viewBox="0 0 17 16">
          <path d="M1 2H7L8 4H16V14H1Z" fill="#f2d574" stroke="#c8a440" />
          <path d="M2 6H15V12H2Z" fill="#fbeeb0" />
          <path d="M4 15V9H13V15H10V12H7V15Z" fill="#56a8e0" stroke="#d8eefc" />
        </svg>
      </button>
      <div className="flex items-center gap-[5px]">
        <button type="button" className={clsx(taskButton, darkTask, "w-[97px]")}><ChromeIcon />ubbthread...</button>
        <button type="button" className={clsx(taskButton, darkTask, "w-[97px]")}><MonitorIcon />Диспетче...</button>
        <button type="button" className={clsx(taskButton, darkTask, "w-[97px]")}><JavaIcon />Cognitum...</button>
        <button type="button" className={clsx(taskButton, "w-[96px] border-[#f6e28c] bg-linear-to-b from-[#e8d458] via-[#dc9a34] to-[#cc5c14]")}><JavaIcon />Терминал.</button>
        <div className="flex">
          <button type="button" className={clsx(taskButton, darkTask, "w-[99px] rounded-r-none border-r-0")}><BellIcon />Напомин...</button>
          <button type="button" className={clsx(taskButton, darkTask, "w-[99px] rounded-none border-r-0")}><MailIcon />FW: счет ...</button>
          <button type="button" className={clsx(taskButton, darkTask, "w-[98px] rounded-l-none")}><OutlookIcon />Входящие...</button>
        </div>
        <button type="button" className={clsx(taskButton, "w-[97px] border-[#c8cccd] bg-linear-to-b from-[#b4b7b9] via-[#7e8284] to-[#8e9294]")}><TsLabIcon />TSLab (ве...</button>
      </div>
      <span className="ml-[13px] w-[30px] pb-1.5 text-[12px] text-white">EN</span>
      <div className="flex items-center gap-2">
        <svg width="16" height="16" viewBox="0 0 16 16">
          <path d="M1 7L7 5V2L10 0V5H15V14L12 16H3L1 14Z" fill="#18a838" />
          <path d="M4 9L7 12L12 7" fill="none" stroke="#fff" strokeWidth="2" />
        </svg>
        <svg width="16" height="16" viewBox="0 0 16 16">
          <rect x="2.500" y="1.500" width="11" height="13" fill="#0a5c14" stroke="#a8b8a8" />
          <path d="M4 3V14M6 3V14M8 3V14M10 3V14M12 3V14" stroke="#30c040" strokeDasharray="1 1" />
        </svg>
        <svg width="16" height="16" viewBox="0 0 16 16">
          <rect x="1" y="0" width="14" height="16" rx="2" fill="#1c7ce0" />
          <circle cx="8" cy="8" r="5.500" fill="#fff" />
          <path d="M3.500 8L6.500 5V7H9.500V5L12.500 8L9.500 11V9H6.500V11Z" fill="#1464b8" />
        </svg>
        <svg width="16" height="16" viewBox="0 0 16 16">
          <path d="M2 0H6V4H8V11L5 14H3L0 11V4H2Z" fill="#b4b8bc" />
          <circle cx="11" cy="11" r="5" fill="#28a428" />
          <path d="M8.500 11L10.500 13L13.500 9" fill="none" stroke="#fff" strokeWidth="1.500" />
        </svg>
        <svg width="16" height="16" viewBox="0 0 16 16">
          <path d="M4 5Q4 1 8 2Q12 0 13 4Q16 6 13 7H5Z" fill="#fff" />
          <path d="M0.500 6.500H8.500V12.500H0.500Z" fill="#24b4e8" stroke="#e8e8e8" />
          <path d="M2 14H8V16H2ZM9 9H13V14" fill="none" stroke="#d8d8d8" />
          <path d="M13 10V16M10 13H16" stroke="#30c840" />
        </svg>
        <svg width="16" height="16" viewBox="0 0 16 16">
          <rect x="1.500" y="0.500" width="13" height="15" rx="3" fill="#26221c" stroke="#a8a8a0" />
          <path d="M6 3V6M10 3V6" stroke="#e03020" strokeWidth="2" />
          <path d="M6 6V9M10 6V9" stroke="#f0d020" strokeWidth="2" />
          <path d="M6 9V13M10 9V13" stroke="#30b030" strokeWidth="2" />
        </svg>
        <TsLabIcon />
        <OutlookIcon />
        <svg width="16" height="16" viewBox="0 0 16 16" fill="none" stroke="#f0f0f0">
          <path d="M5.500 4.500H14.500V11.500H5.500ZM7 14.500H13M10 12V14" strokeWidth="1.400" />
          <path d="M0.500 2.500H4.500V5.500H0.500ZM2.500 6V13.500H6M1.500 0V2M3.500 0V2" />
        </svg>
        <svg width="16" height="16" viewBox="0 0 16 16">
          <path d="M1 5H3L8 1V15L3 11H1Z" fill="#f4f4f4" />
          <circle cx="10.500" cy="11" r="4" fill="#f4d0d0" stroke="#d82020" strokeWidth="2" />
          <path d="M8 8.500L13 13.500" stroke="#d82020" strokeWidth="2" />
        </svg>
      </div>
      <time className="mr-[28px] ml-auto text-[12px] text-white">8:12</time>
      <button type="button" aria-label="Показать рабочий стол" className="h-[29px] w-3 border border-[#6a7072] bg-linear-to-b from-[#4a4e50] to-[#0c0f10]" />
    </footer>
  );
}

const MENU = ["Файл", "Правка", "Вид", "Редактор", "Портфель", "Инструменты", "Окна", "Справка"];

export default function App() {
  return (
    <div className="flex min-h-screen flex-col overflow-hidden bg-white font-['Noto_Sans',sans-serif]">
      <TitleBar />
      <nav className="flex h-7 items-center gap-3.5 border border-[#c9d6ea] bg-[#f0f4fc] px-2 pt-0.5 font-['Roboto',sans-serif] text-[12px] text-black">
        {MENU.map((item) => <button key={item} type="button">{item}</button>)}
      </nav>
      <Toolbars />
      <nav className="flex h-5 items-stretch pl-px text-[8px] text-[#3a3a3a]">
        <button type="button" className={clsx(activeTab, "mt-[3px] w-[140px] pl-0.5 font-bold text-black")}>
          Лаб: пробой_первого_часа* <Cross />
        </button>
        <button type="button" className="w-[164px] pb-0.5 pl-[3px] text-left">Лаб: пробой_первого_часа_mod++</button>
        <button type="button" className="w-[119px] pb-0.5 pl-[3px] text-left">Управление скриптами</button>
        <button type="button" className="pb-0.5 pl-[3px] text-left">Лаб: Si_BB_OZ</button>
        <span className="mr-1.5 ml-auto flex items-center gap-1.5 pt-1"><Caret bar /><Cross /></span>
      </nav>
      <Workspace />
      <Messages />
      <StatusBar />
      <TaskBar />
    </div>
  );
}
